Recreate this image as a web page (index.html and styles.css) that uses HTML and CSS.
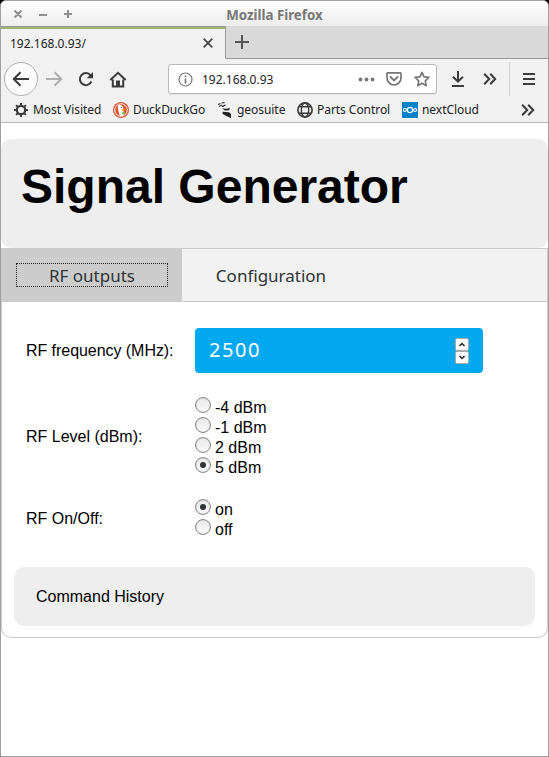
FILE: index.html
```html
<!DOCTYPE html>
<html lang="en">
<head>
<meta charset="utf-8">
<title>Signal Generator</title>
<link rel="stylesheet" href="styles.css">
</head>
<body>
<div class="window">
  <header class="titlebar">
    <svg class="controls" width="64" height="12" viewBox="0 0 64 12"><path d="M1.5 2.5l7 7M8.5 2.5l-7 7M26 7h8M51 6h8M55 2v8" stroke="#8f8f8f" stroke-width="2" fill="none"/></svg>
    <span class="wintitle">Mozilla Firefox</span>
  </header>
  <div class="tabstrip">
    <div class="browsertab"><span>192.168.0.93/</span>
      <svg width="10" height="10" viewBox="0 0 10 10"><path d="M.7.7l8.6 8.6M9.3.7L.7 9.3" stroke="#444" stroke-width="1.7"/></svg>
    </div>
    <div class="newtab"><svg width="14" height="14" viewBox="0 0 14 14"><path d="M0 7h14M7 0v14" stroke="#555" stroke-width="2"/></svg></div>
  </div>
  <div class="toolbar">
    <div class="back"><svg width="18" height="16" viewBox="0 0 18 16"><path d="M17 8H2M8.5 1.3L1.8 8l6.7 6.7" fill="none" stroke="#3b3b3c" stroke-width="2"/></svg></div>
    <svg class="forward" width="18" height="16" viewBox="0 0 18 16"><path d="M1 8h15M9.5 1.3L16.2 8l-6.7 6.7" fill="none" stroke="#adadad" stroke-width="2"/></svg>
    <svg class="reload" width="16" height="16" viewBox="0 0 16 16"><path d="M12.6 4.4A6 6 0 1 0 13.4 10.500" fill="none" stroke="#3b3b3c" stroke-width="2"/><path d="M15 1v6.300H8.700z" fill="#3b3b3c"/></svg>
    <svg class="home" width="18" height="17" viewBox="0 0 18 17"><path d="M1.300 9L9 1.800 16.700 9M3.800 8.500v7h10.400v-7" fill="none" stroke="#3b3b3c" stroke-width="2"/><path d="M7 9.500h4V16H7z" fill="#3b3b3c"/></svg>
    <div class="urlbar">
      <svg class="info" width="15" height="15" viewBox="0 0 15 15"><circle cx="7.500" cy="7.500" r="6.500" fill="none" stroke="#777" stroke-width="1.200"/><path d="M7.500 6.500v5M7.500 3.500v1.800" stroke="#777" stroke-width="1.700"/></svg>
      <span class="url">192.168.0.93</span>
      <svg class="dots" width="17" height="5" viewBox="0 0 17 5"><g fill="#777"><circle cx="2.500" cy="2.500" r="1.900"/><circle cx="8.500" cy="2.500" r="1.900"/><circle cx="14.500" cy="2.500" r="1.900"/></g></svg>
      <svg class="pocket" width="16" height="16" viewBox="0 0 16 16"><path d="M1.800 1.800h12.400q.8 0 .8.800V7A7 7 0 0 1 1 7V2.600q0-.8.800-.8z" fill="none" stroke="#777" stroke-width="1.700"/><path d="M4.500 6L8 9.400 11.500 6" fill="none" stroke="#777" stroke-width="1.900" stroke-linecap="round"/></svg>
      <svg class="star" width="16" height="16" viewBox="0 0 16 16"><path d="M8 1.300l2 4.500 4.900.6-3.600 3.400.9 4.900L8 12.300l-4.200 2.400.9-4.900L1.100 6.400 6 5.800z" fill="none" stroke="#777" stroke-width="1.700" stroke-linejoin="round"/></svg>
    </div>
    <svg class="download" width="14" height="16" viewBox="0 0 14 16"><path d="M7 0v10.500M2 5.700l5 5 5-5M1 15h12" fill="none" stroke="#3b3b3c" stroke-width="2"/></svg>
    <svg class="overflow" width="14" height="12" viewBox="0 0 14 12"><path d="M1.200.8L6.200 6l-5 5.200M7.200.8l5 5.200-5 5.200" fill="none" stroke="#3b3b3c" stroke-width="2"/></svg>
    <div class="menu"><svg width="12" height="12" viewBox="0 0 12 12"><path d="M0 1h12M0 6h12M0 11h12" stroke="#3b3b3c" stroke-width="2"/></svg></div>
  </div>
  <nav class="bookmarks">
    <div class="bm most"><svg width="16" height="16" viewBox="0 0 16 16"><circle cx="8" cy="8" r="4.200" fill="none" stroke="#3b3b3c" stroke-width="2.200"/><path d="M8 1v3M8 12v3M1 8h3M12 8h3M3.100 3.100l2 2M10.900 10.900l2 2M3.100 12.900l2-2M10.900 5.100l2-2" stroke="#3b3b3c" stroke-width="2"/></svg><span>Most Visited</span></div>
    <div class="bm duck"><svg width="16" height="16" viewBox="0 0 16 16"><circle cx="8" cy="8" r="8" fill="#de5833"/><circle cx="8" cy="8" r="6.300" fill="#de5833" stroke="#fff" stroke-width=".9"/><path d="M5 3.300q3-1.300 4.700 1.300c.8 2 .3 4.700 1.300 8.500q-2 1.200-4.200.700C6 10.500 4.200 6.500 5 3.300z" fill="#fff"/><path d="M8.300 7.300q2-.8 3.500 0-1 1.300-3 1.400z" fill="#fdb813"/><path d="M8.500 10.700l3.200-.8.300 2.700-3-.5z" fill="#65bc46"/><circle cx="8.300" cy="5.600" r=".6" fill="#2d4f8e"/></svg><span>DuckDuckGo</span></div>
    <div class="bm geo"><svg width="16" height="16" viewBox="0 0 16 16"><path d="M1 2.500l2.500-1M2 4.500l3-1.500M4.500 1l3-.3" stroke="#333" stroke-width="1.200"/><path d="M4.500 4.200l3.500-1.700 1 .8-3.200 2zM5 6.500l4.500.300 3.500-.8-1 2.200-4 .3zM5.500 9.800l6.500.4 2 1.800v4L10 14.300 5.700 12z" fill="#222"/></svg><span>geosuite</span></div>
    <div class="bm parts"><svg width="16" height="16" viewBox="0 0 16 16"><g fill="none" stroke="#3b3b3c"><circle cx="8" cy="8" r="7.100" stroke-width="1.700"/><ellipse cx="8" cy="8" rx="3.700" ry="7" stroke-width="1.400"/><path d="M2 4.800h12M2 11.300h12" stroke-width="1.500"/></g></svg><span>Parts Control</span></div>
    <div class="bm next"><svg width="16" height="16" viewBox="0 0 16 16"><rect width="16" height="16" rx="1" fill="#0082c9"/><g fill="none" stroke="#fff" stroke-width="1.200"><circle cx="8" cy="8" r="2.600"/><circle cx="2.900" cy="8" r="1.500"/><circle cx="13.100" cy="8" r="1.500"/></g></svg><span>nextCloud</span></div>
    <svg class="more" width="14" height="12" viewBox="0 0 14 12"><path d="M1.200.8L6.200 6l-5 5.200M7.200.8l5 5.200-5 5.200" fill="none" stroke="#3b3b3c" stroke-width="2"/></svg>
  </nav>
  <main class="page">
    <div class="hero"><h1>Signal Generator</h1></div>
    <div class="tabs">
      <button class="tab active"><span>RF outputs</span></button>
      <button class="tab"><span>Configuration</span></button>
    </div>
    <section class="panel">
      <div class="row freq"><span>RF frequency (MHz):</span>
        <div class="number"><span>2500</span>
          <div class="spin"><i><svg width="8" height="5" viewBox="0 0 8 5"><path d="M1.500 4L4 1.500 6.500 4" fill="none" stroke="#222" stroke-width="1.500"/></svg></i><i><svg width="8" height="5" viewBox="0 0 8 5"><path d="M1.500 1L4 3.500 6.500 1" fill="none" stroke="#222" stroke-width="1.500"/></svg></i></div>
        </div>
      </div>
      <div class="row level"><span>RF Level (dBm):</span>
        <div class="options"><label><b></b>-4 dBm</label><label><b></b>-1 dBm</label><label><b></b>2 dBm</label><label><b class="on"></b>5 dBm</label></div>
      </div>
      <div class="row power"><span>RF On/Off:</span>
        <div class="options"><label><b class="on"></b>on</label><label><b></b>off</label></div>
      </div>
      <div class="history">Command History</div>
    </section>
  </main>
</div>
</body>
</html>
```
FILE: styles.css
```css
* { box-sizing: border-box; }
body { margin: 0; background: #000; font: 12px "Noto Sans", sans-serif; color: #222; }
svg { display: block; flex: none; }
.window { width: 549px; height: 757px; border: 1px solid #a0a0a0; border-radius: 6px 6px 0 0; background: #fff; overflow: hidden; }
.titlebar { height: 25px; background: linear-gradient(#fff, #ededed); display: grid; grid-template-columns: 100px 1fr 100px; align-items: center; }
.controls { margin-left: 12px; }
.wintitle { text-align: center; font-weight: bold; font-size: 13.3px; color: #777; line-height: 16px; padding-top: 3px; white-space: nowrap; }
.tabstrip { height: 33px; display: flex; background: #d9d9d9; }
.browsertab { width: 225px; height: 33px; background: linear-gradient(#999 1px, #98b471 1px 3px, #f1f1f1 3px); border-right: 1px solid #999; display: flex; align-items: center; justify-content: space-between; padding: 1px 12px 0 9px; }
.browsertab svg { margin-top: -1px; }
.newtab { flex: 1; border-bottom: 1px solid #999; padding: 9px 0 0 9px; }
.toolbar { height: 40px; background: #f1f1f1; display: flex; align-items: center; padding-left: 3px; }
.back { width: 34px; height: 34px; border: 1px solid #b0b0b0; border-radius: 50%; background: #fbfbfb; display: flex; align-items: center; justify-content: center; }
.forward { margin-left: 7px; }
.reload { margin-left: 15px; }
.home { margin-left: 15px; }
.urlbar { width: 269px; height: 30px; margin-left: 41px; border: 1px solid #b8b8b8; border-radius: 3px; background: #fff; display: flex; align-items: center; padding-left: 9px; box-shadow: 0 1px 1px #0001; }
.url { margin-left: 9px; width: 156px; }
.pocket { margin-left: 11px; }
.star { margin-left: 12px; }
.download { margin-left: 14px; }
.overflow { margin-left: 18px; }
.menu { height: 34px; border-left: 1px solid #d3d3d3; margin-left: 12px; padding: 11px 0 0 13px; }
.bookmarks { height: 24px; background: #f1f1f1; border-bottom: 1px solid #b5b5b5; display: flex; align-items: center; padding: 0 0 2px 12px; }
.bm { display: flex; align-items: center; gap: 4px; white-space: nowrap; }
.bm span { letter-spacing: -.05px; }
.most { width: 100px; }
.duck { width: 104px; }
.geo { width: 80px; }
.parts { width: 105px; }
.next { width: 119px; }
.page { padding-top: 16px; font: 16px "Liberation Sans", sans-serif; color: #000; }
.hero { height: 109px; background: #eee; border-radius: 10px; padding: 20px; }
h1 { margin: 0; font-size: 48px; line-height: 55px; }
.tabs { height: 54px; border: 1px solid #ccc; background: #f1f1f1; display: flex; }
.tab { border: 0; background: none; padding: 0 15px 0 13px; width: 180px; font: 17px "Noto Sans", sans-serif; color: #2e3436; }
.tab span { display: block; height: 24px; line-height: 26px; }
.active { background: #ccc; padding: 0 14px; }
.active span { outline: 1px dotted #222; outline-offset: -1px; }
.panel { height: 336px; border: 1px solid #ccc; border-top: 0; border-radius: 0 0 10px 10px; padding: 26px 12px 0; }
.row { display: grid; grid-template-columns: 169px 1fr; align-items: center; padding-left: 12px; }
.freq > span { letter-spacing: -.05px; }
.number { width: 288px; height: 45px; background: #03a9f0; border-radius: 4px; color: #fff; font: 20px "Noto Sans", sans-serif; letter-spacing: 1.6px; display: flex; align-items: center; justify-content: space-between; padding: 0 14px; }
.number > span { margin-top: -2px; }
.spin { display: grid; }
.spin i { width: 14px; height: 13px; background: #fff; border: 1px solid #aaa; border-radius: 2px; display: flex; align-items: center; justify-content: center; }
.level { margin-top: 24px; }
.power { margin-top: 22px; }
.options label { display: flex; height: 20px; line-height: 21px; gap: 4px; }
.options b { width: 16px; height: 16px; border: 1px solid #8c8c8c; border-radius: 50%; background: linear-gradient(#e8e8e8, #fbfbfb); display: flex; align-items: center; justify-content: center; box-shadow: inset 0 0 1px #999; }
.options .on::after { content: ""; width: 6px; height: 6px; border-radius: 50%; background: #2e3436; }
.history { height: 59px; margin-top: 28px; background: #eee; border-radius: 10px; padding-left: 22px; line-height: 59px; }
```
